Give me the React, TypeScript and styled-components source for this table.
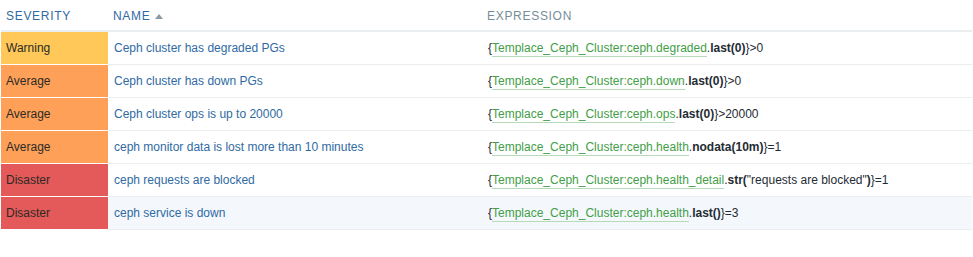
import React from "react";
import styled, { createGlobalStyle } from "styled-components";

const Global = createGlobalStyle`
  html, body { margin: 0; padding: 0; background: #ffffff; }
  body { font-family: "Liberation Sans", Arial, sans-serif; font-size: 12px; color: #1f2c33; }
`;

const Wrap = styled.div`
  padding: 0 1px;
`;

const Table = styled.table`
  width: 100%;
  border-collapse: collapse;
  table-layout: fixed;
`;

const Th = styled.th<{ $muted?: boolean }>`
  text-align: left;
  font-weight: normal;
  text-transform: uppercase;
  letter-spacing: 0.7px;
  height: 31px;
  padding: 1px 5px 0;
  vertical-align: middle;
  color: ${(p) => (p.$muted ? "#768d99" : "#2f6aa3")};
  border-bottom: 2px solid #ebeef0;
  box-sizing: border-box;
`;

const SortArrow = styled.span`
  display: inline-block;
  width: 0;
  height: 0;
  margin-left: 5px;
  border-left: 4px solid transparent;
  border-right: 4px solid transparent;
  border-bottom: 5px solid #8a9aa4;
  vertical-align: 1px;
`;

const Row = styled.tr<{ $hover?: boolean }>`
  background: ${(p) => (p.$hover ? "#f4f8fc" : "#ffffff")};
  td { border-bottom: 1px solid #ebeef0; }
`;

const SevCell = styled.td<{ $color: string }>`
  background: ${(p) => p.$color};
  height: 32px;
  padding: 0 5px;
  color: #2b2b25;
  vertical-align: middle;
  && { border-bottom: 1px solid #ffffff; }
`;

const Cell = styled.td`
  height: 32px;
  padding: 0 6px;
  vertical-align: middle;
  white-space: nowrap;
`;

const NameLink = styled.span`
  color: #2f6aa3;
`;

const HostKey = styled.span`
  color: #429e47;
  border-bottom: 1px solid #b6d9b8;
  padding-bottom: 1px;
`;

const Fn = styled.b`
  font-weight: bold;
  color: #1f2c33;
`;

const Plain = styled.span`
  color: #1f2c33;
`;

type Part = { t: string; k: "plain" | "host" | "fn" };

type Trigger = {
  sev: "Warning" | "Average" | "Disaster";
  name: string;
  expr: Part[];
  hover?: boolean;
};

const sevColors: Record<Trigger["sev"], string> = {
  Warning: "#ffc859",
  Average: "#ffa059",
  Disaster: "#e45959",
};

const P = (t: string): Part => ({ t, k: "plain" });
const H = (t: string): Part => ({ t, k: "host" });
const F = (t: string): Part => ({ t, k: "fn" });

const rows: Trigger[] = [
  {
    sev: "Warning",
    name: "Ceph cluster has degraded PGs",
    expr: [P("{"), H("Templace_Ceph_Cluster:ceph.degraded"), P("."), F("last(0)"), P("}>0")],
  },
  {
    sev: "Average",
    name: "Ceph cluster has down PGs",
    expr: [P("{"), H("Templace_Ceph_Cluster:ceph.down"), P("."), F("last(0)"), P("}>0")],
  },
  {
    sev: "Average",
    name: "Ceph cluster ops is up to 20000",
    expr: [P("{"), H("Templace_Ceph_Cluster:ceph.ops"), P("."), F("last(0)"), P("}>20000")],
  },
  {
    sev: "Average",
    name: "ceph monitor data is lost more than 10 minutes",
    expr: [P("{"), H("Templace_Ceph_Cluster:ceph.health"), P("."), F("nodata(10m)"), P("}=1")],
  },
  {
    sev: "Disaster",
    name: "ceph requests are blocked",
    expr: [
      P("{"),
      H("Templace_Ceph_Cluster:ceph.health_detail"),
      P("."),
      F("str("),
      P('"requests are blocked"'),
      F(")"),
      P("}=1"),
    ],
  },
  {
    sev: "Disaster",
    name: "ceph service is down",
    expr: [P("{"), H("Templace_Ceph_Cluster:ceph.health"), P("."), F("last()"), P("}=3")],
    hover: true,
  },
];

const renderPart = (p: Part, i: number) => {
  if (p.k === "host") return <HostKey key={i}>{p.t}</HostKey>;
  if (p.k === "fn") return <Fn key={i}>{p.t}</Fn>;
  return <Plain key={i}>{p.t}</Plain>;
};

export default function App() {
  return (
    <>
      <Global />
      <Wrap>
        <Table>
          <colgroup>
            <col style={{ width: 107 }} />
            <col style={{ width: 374 }} />
            <col />
          </colgroup>
          <thead>
            <tr>
              <Th>Severity</Th>
              <Th>
                Name
                <SortArrow />
              </Th>
              <Th $muted>Expression</Th>
            </tr>
          </thead>
          <tbody>
            {rows.map((r, i) => (
              <Row key={i} $hover={r.hover}>
                <SevCell $color={sevColors[r.sev]}>{r.sev}</SevCell>
                <Cell>
                  <NameLink>{r.name}</NameLink>
                </Cell>
                <Cell>{r.expr.map(renderPart)}</Cell>
              </Row>
            ))}
          </tbody>
        </Table>
      </Wrap>
    </>
  );
}
